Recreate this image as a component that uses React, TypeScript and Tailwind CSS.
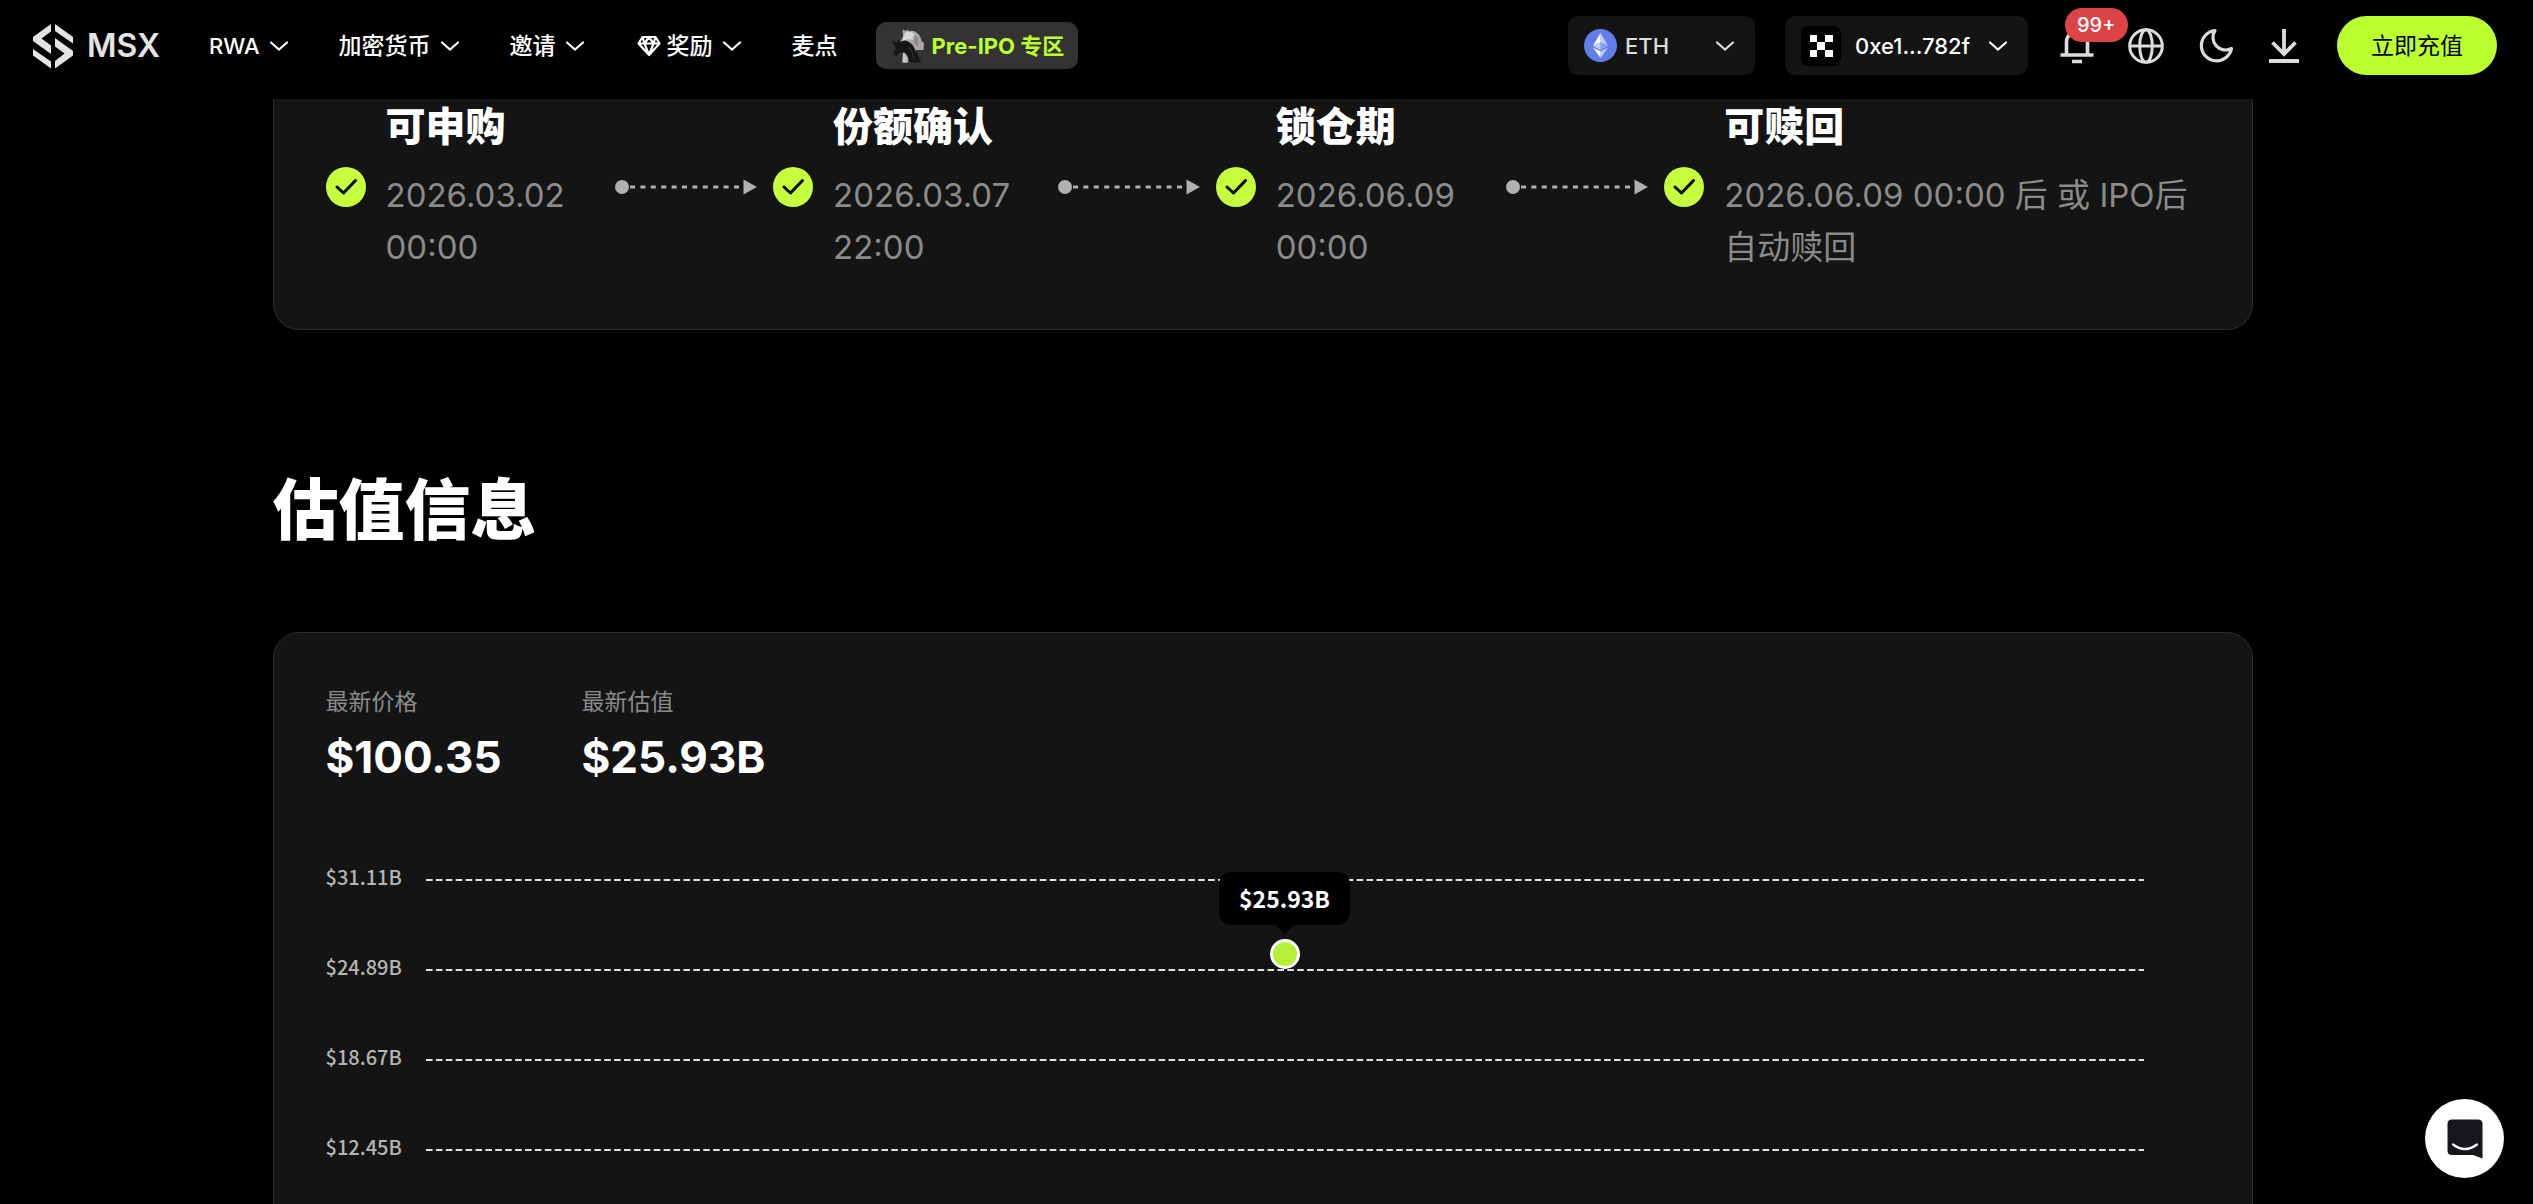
import React from "react";

const steps = [
	{ title: "可申购", date: "2026.03.02 00:00" },
	{ title: "份额确认", date: "2026.03.07 22:00" },
	{ title: "锁仓期", date: "2026.06.09 00:00" },
	{ title: "可赎回", date: "2026.06.09 00:00 后 或 IPO后自动赎回" },
];

const metrics = [
	{ label: "最新价格", value: "$100.35" },
	{ label: "最新估值", value: "$25.93B" },
];

const ticks = ["$31.11B", "$24.89B", "$18.67B", "$12.45B"];

const Chevron = () => (
	<svg width="20" height="12" viewBox="0 0 20 12" fill="none" aria-hidden="true">
		<path
			d="M2 2.5L10 9.5L18 2.5"
			stroke="currentColor"
			strokeWidth="2.2"
			strokeLinecap="round"
		/>
	</svg>
);

const Logo = () => (
	<svg width="42" height="46" viewBox="0 0 42 46" fill="#e4e4e4" aria-hidden="true">
		<path d="M19 1V8.5L9.5 15.5L19 22.5V31L1 18V14Z" />
		<path d="M1 26L19 38.5V45.5L1 32.5Z" />
		<path d="M23 1L41 14V20.5L23 8Z" />
		<path d="M23 15L41 28V32.5L23 45.5V38L32.5 30.5L23 23.5Z" />
	</svg>
);

const Gem = () => (
	<svg width="26" height="22" viewBox="-2 0 26 22" fill="none" aria-hidden="true">
		<path
			d="M5.5 2H18.5L22.5 8.5L12 20L1.5 8.5Z M1.5 8.5H22.5 M5.5 2L7.5 8.5L12 20L16.5 8.5L18.5 2 M7.5 8.5L12 2L16.5 8.5"
			stroke="currentColor"
			strokeWidth="2.2"
			strokeLinejoin="round"
		/>
	</svg>
);

const Knights = () => (
	<svg width="32" height="34" viewBox="0 0 32 34" aria-hidden="true">
		<path d="M10.5 0.5L14 2L15 0.5L17 2Q22 1 25 4Q29 7 29.5 12L32 14L31.5 21H24L18 33.5H10.5L11 24L8 14L11 7Z" fill="#a9a6a5" />
		<path d="M14 3Q20 1.5 23 6Q20 6 21 11Q16 9 11 12Q11 6 14 3Z" fill="#d9d7d6" />
		<path d="M23 6Q27 8 26 18L22 14Z" fill="#8b8887" />
		<path d="M0 11.5L5 14L6 11L8.5 13Q13 10 17 13Q22 16 23 21Q27 27 29 33.5H16.5Q17 27 12.5 23.5L7.5 23.5L4.5 27L2 26Q1.5 22 4 19Z" fill="#171514" />
		<path d="M11 24Q15 27 15 33.5H10.5Z" fill="#c8c5c4" />
		<path d="M17 18Q21 23 22 31" stroke="#3b3736" strokeWidth="1" fill="none" />
	</svg>
);

const EthIcon = () => (
	<svg width="33" height="33" viewBox="0 0 33 33" aria-hidden="true">
		<circle cx="16.5" cy="16.5" r="16.5" fill="#627eea" />
		<path d="M16.5 4V13.3L24 16.8Z" fill="#fff" fillOpacity=".6" />
		<path d="M16.5 4L9 16.8L16.5 13.3Z" fill="#fff" />
		<path d="M16.5 22.6V29L24 18.4Z" fill="#fff" fillOpacity=".6" />
		<path d="M16.5 29V22.6L9 18.4Z" fill="#fff" />
		<path d="M16.5 21.2L24 16.8L16.5 13.3Z" fill="#fff" fillOpacity=".25" />
		<path d="M9 16.8L16.5 21.2V13.3Z" fill="#fff" fillOpacity=".6" />
	</svg>
);

const WalletIcon = () => (
	<svg width="40" height="40" viewBox="0 0 40 40" aria-hidden="true">
		<rect width="40" height="40" rx="7" fill="#000" />
		<path
			d="M9 9h7v7h-7z M24 9h8v7h-8z M16 16h8v8h-8z M9 24h7v7h-7z M24 24h8v7h-8z"
			fill="#fff"
		/>
	</svg>
);

const Bell = () => (
	<svg width="34" height="36" viewBox="0 0 34 36" fill="none" stroke="#dcdcdc" strokeWidth="3.6" aria-hidden="true">
		<path d="M6.5 27V14a10.5 10.5 0 0 1 21 0V27 M0.5 27H33.5 M12 33.5H22" />
	</svg>
);

const Globe = () => (
	<svg width="36" height="36" viewBox="0 0 36 36" fill="none" stroke="#dcdcdc" strokeWidth="3" aria-hidden="true">
		<circle cx="18" cy="18" r="16.3" />
		<ellipse cx="18" cy="18" rx="6.3" ry="16.3" />
		<path d="M2 18H34" />
	</svg>
);

const Moon = () => (
	<svg width="36" height="36" viewBox="0 0 36 36" fill="none" aria-hidden="true">
		<path
			d="M17 2.5A15.2 15.2 0 1 0 33.5 20.500A12.6 12.6 0 0 1 17 2.5Z"
			stroke="#dcdcdc"
			strokeWidth="3.2"
			strokeLinejoin="round"
		/>
	</svg>
);

const Download = () => (
	<svg width="32" height="36" viewBox="0 0 32 36" fill="none" stroke="#dcdcdc" strokeWidth="3.8" aria-hidden="true">
		<path d="M16 1V26 M4.5 14.5L16 26L27.5 14.5 M1 33H31" />
	</svg>
);

const CheckBadge = () => (
	<svg className="shrink-0" width="40" height="40" viewBox="0 0 40 40" fill="none" aria-hidden="true">
		<circle cx="20" cy="20" r="20" fill="#c5ff3d" />
		<path
			d="M11 20L17.5 26L29.5 13.5"
			stroke="#000"
			strokeWidth="3"
			strokeLinecap="round"
			strokeLinejoin="round"
		/>
	</svg>
);

const StepArrow = () => (
	<svg width="142" height="16" viewBox="0 0 142 16" aria-hidden="true">
		<circle cx="7" cy="8" r="7" fill="#b0b0b0" />
		<path d="M15 8H128" stroke="#b0b0b0" strokeWidth="3" strokeDasharray="5 5.4" />
		<path d="M128.5 0.5L142 8L128.5 15.5Z" fill="#b0b0b0" />
	</svg>
);

const NavItem = ({ label, icon }: { label: React.ReactNode; icon?: React.ReactNode }) => (
	<button type="button" className="flex items-center gap-[9px]">
		<span className="flex items-center gap-[6px]">
			{icon}
			{label}
		</span>
		<Chevron />
	</button>
);

const Header = () => (
	<header className="flex h-[99px] shrink-0 items-center justify-between bg-black pt-[10px] pr-9 pb-[18px] pl-8 text-[23px] leading-[34px] font-medium whitespace-nowrap text-white">
		<div className="flex items-center">
			<a href="#home" className="mr-[49px] flex items-center gap-[13px] text-[32px] font-semibold text-[#e4e4e4]">
				<Logo />
				MSX
			</a>
			<nav className="flex items-center gap-[50px]">
				<NavItem label={<span className="text-[22px]">RWA</span>} />
				<NavItem label="加密货币" />
				<NavItem label="邀请" />
				<NavItem label="奖励" icon={<Gem />} />
				<a href="#points">麦点</a>
			</nav>
			<a
				href="#pre-ipo"
				className="ml-[38px] flex h-[47px] items-center gap-2 rounded-[10px] bg-[#333] pr-[14px] pl-4 text-[22px] font-bold text-[#bcff2f]"
			>
				<Knights />
				Pre-IPO 专区
			</a>
		</div>

		<div className="flex items-center">
			<div className="relative mr-[30px] flex items-center text-[22px] text-[#dcdcdc]">
				<select
					aria-label="网络"
					className="h-[59px] w-[187px] appearance-none rounded-[10px] bg-[#141414] pl-[57px] outline-none"
				>
					<option>ETH</option>
				</select>
				<span className="pointer-events-none absolute left-4">
					<EthIcon />
				</span>
				<span className="pointer-events-none absolute right-5">
					<Chevron />
				</span>
			</div>
			<button type="button" className="mr-8 flex h-[59px] items-center rounded-[10px] bg-[#141414] pr-5 pl-4 text-[22px]">
				<WalletIcon />
				<span className="mr-[18px] ml-[14px]">0xe1...782f</span>
				<Chevron />
			</button>
			<div className="mr-[37px] flex items-center gap-[34px]">
				<button type="button" aria-label="通知" className="relative">
					<Bell />
					<span className="absolute -top-5 left-[5px] rounded-full bg-[#dd4446] px-3 text-[20px]">
						99+
					</span>
				</button>
				<button type="button" aria-label="语言">
					<Globe />
				</button>
				<button type="button" aria-label="主题">
					<Moon />
				</button>
				<button type="button" aria-label="下载">
					<Download />
				</button>
			</div>
			<button type="button" className="h-[59px] rounded-full bg-[#bcff2f] px-[34px] font-normal text-black">
				立即充值
			</button>
		</div>
	</header>
);

const StepsCard = () => (
	<section className="grid grid-cols-[274fr_142px_269fr_142px_275fr_142px_536fr] items-center gap-4 rounded-b-[26px] border border-t-0 border-[#2c2c2c] bg-[#141414] px-[52px] pt-0.5 pb-14">
		{steps.map((step, index) => (
			<React.Fragment key={step.title}>
				{index > 0 && <StepArrow />}
				<div className="flex items-center gap-5">
					<CheckBadge />
					<div>
						<h3 className="mb-4 text-[40px] leading-[52px] font-black text-white">
							{step.title}
						</h3>
						<p className="text-[33px] leading-[52px] text-[#8a8a8a]">{step.date}</p>
					</div>
				</div>
			</React.Fragment>
		))}
	</section>
);

const ValuationChart = () => (
	<div className="relative mt-[78px] mr-14 font-['Noto_Sans_CJK_SC',sans-serif]">
		{ticks.map((tick) => (
			<div key={tick} className="flex h-[90px] items-start">
				<span className="w-[100px] text-[20px] leading-6 font-medium text-[#b4b4b4]">{tick}</span>
				<svg className="h-[30px] min-w-0 flex-1" aria-hidden="true">
					<line
						x1="0"
						x2="100%"
						y1="15"
						y2="15"
						stroke="#e0e0e0"
						strokeWidth="1.8"
						strokeDasharray="6.6 3.3"
					/>
				</svg>
			</div>
		))}
		<div className="absolute top-[7px] right-0 left-[100px] flex flex-col items-center">
			<div className="rounded-xl bg-black px-5 text-[23px] leading-[53px] font-bold text-white">
				$25.93B
			</div>
			<svg width="18" height="9" viewBox="0 0 18 9" aria-hidden="true">
				<path d="M0 0H18L9 9Z" />
			</svg>
			<span className="mt-[5px] size-[30px] rounded-full border-[3px] border-white bg-[#b4f038]" />
		</div>
	</div>
);

const App = () => {
	return (
		<div className="flex h-screen flex-col overflow-hidden bg-black font-['Inter','Noto_Sans_CJK_SC',sans-serif]">
			<Header />
			<main className="min-h-0 flex-1 pr-2">
				<div className="mx-auto max-w-[1980px]">
					<StepsCard />
					<h2 className="mt-[140px] mb-[82px] text-[66px] leading-[80px] font-black text-white">
						估值信息
					</h2>
					<section className="rounded-[26px] border border-[#2c2c2c] bg-[#141414] p-[52px]">
						<dl className="flex gap-20">
							{metrics.map((metric) => (
								<div key={metric.label}>
									<dt className="text-[23px] leading-[34px] text-[#8a8a8a]">{metric.label}</dt>
									<dd className="mt-2 text-[44px] leading-[60px] font-bold text-white">
										{metric.value}
									</dd>
								</div>
							))}
						</dl>
						<ValuationChart />
					</section>
				</div>
			</main>
			<button
				type="button"
				aria-label="客服"
				className="fixed right-[29px] bottom-[26px] flex size-[79px] items-center justify-center rounded-full bg-white"
			>
				<svg width="36" height="40" viewBox="0 0 36 40" fill="none" aria-hidden="true">
					<path d="M5 0.5H31Q35.5 0.5 35.5 5V39.5L26 36H5Q0.5 36 0.5 31.5V5Q0.5 0.5 5 0.5Z" fill="#15171b" />
					<path d="M6 25.5Q18 34.5 30 25.5" stroke="#fff" strokeWidth="2.2" strokeLinecap="round" />
				</svg>
			</button>
		</div>
	);
};

export default App;
